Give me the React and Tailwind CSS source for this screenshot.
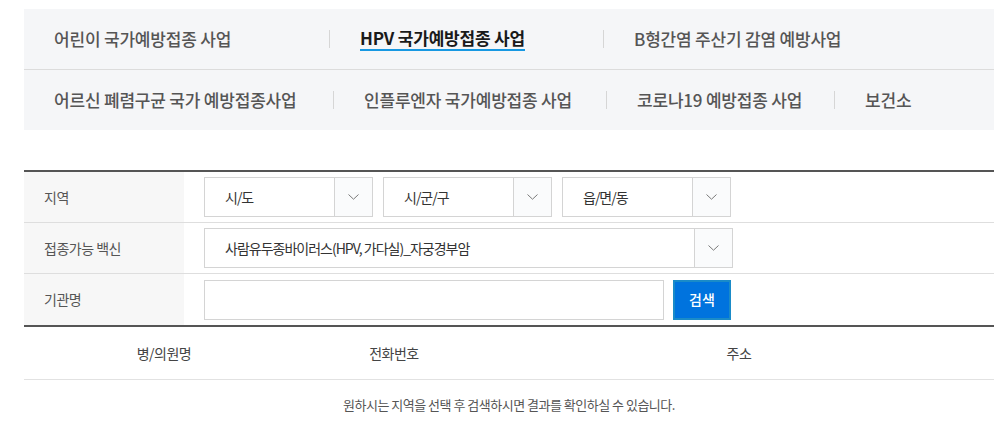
import React from 'react';

const font = { fontFamily: '"Noto Sans CJK KR", "Noto Sans", sans-serif' };

/* Nav rows: fixed item widths so dividers land where the reference has them */
const navRows = [
    [
        { label: '어린이 국가예방접종 사업', w: 'w-[305px]' },
        { label: 'HPV 국가예방접종 사업', w: 'w-[274px]', active: true },
        { label: 'B형간염 주산기 감염 예방사업', w: 'w-[300px]' },
    ],
    [
        { label: '어르신 폐렴구균 국가 예방접종사업', w: 'w-[309px]' },
        { label: '인플루엔자 국가예방접종 사업', w: 'w-[273px]' },
        { label: '코로나19 예방접종 사업', w: 'w-[228px]' },
        { label: '보건소', w: 'w-[120px]' },
    ],
];

const Chevron = () => (
    <svg width="11" height="6" viewBox="0 0 11 6" fill="none">
        <path d="M0.5 0.5L5.5 5.2L10.5 0.5" stroke="#7a7a7a" strokeWidth="1" />
    </svg>
);

const Select = ({ label, className }) => (
    <div className={`flex h-10 border border-[#d4d4d4] bg-white ${className}`}>
        <div className="flex-1 flex items-center pl-5 text-[14px] text-[#333] tracking-[-1px]">{label}</div>
        <div className="w-[38px] flex items-center justify-center border-l border-[#d4d4d4] bg-[#fafbfc]">
            <Chevron />
        </div>
    </div>
);

const FormRow = ({ label, children, last }) => (
    <div className={`flex h-[51px] ${last ? '' : 'border-b border-[#dedede]'}`}>
        <div className="w-[160px] bg-[#f7f7f7] flex items-center pl-5 text-[14px] text-[#555] tracking-[-0.5px]">{label}</div>
        <div className="flex-1 flex items-center pl-5 gap-[10px]">{children}</div>
    </div>
);

export default function App() {
    return (
        <div className="bg-white w-[1008px] h-[425px] overflow-hidden" style={font}>
            {/* Program tabs */}
            <div className="ml-6 mt-[9px] w-[970px] bg-[#f5f6f8]">
                {navRows.map((row, ri) => (
                    <div key={ri} className={`flex h-[60px] items-center ${ri === 0 ? 'border-b border-[#dcdcdc] h-[61px]' : ''}`}>
                        {row.map((item, i) => (
                            <div key={item.label} className={`flex items-center h-full ${item.w}`}>
                                {i > 0 && <span className="w-px h-[18px] bg-[#d6d6d6]" />}
                                <span
                                    className={`ml-[30px] text-[17px] tracking-[-0.2px] leading-[22px] ${
                                        item.active
                                            ? 'text-[#1a1a1a] font-semibold border-b-2 border-[#1798e2]'
                                            : 'text-[#555] font-medium'
                                    }`}
                                >
                                    {item.label}
                                </span>
                            </div>
                        ))}
                    </div>
                ))}
            </div>

            {/* Search form */}
            <div className="ml-6 mt-10 w-[970px] border-t-2 border-b-2 border-[#555]">
                <FormRow label="지역">
                    <Select label="시/도" className="w-[169px]" />
                    <Select label="시/군/구" className="w-[169px]" />
                    <Select label="읍/면/동" className="w-[169px]" />
                </FormRow>
                <FormRow label="접종가능 백신">
                    <Select label="사람유두종바이러스(HPV, 가다실)_자궁경부암" className="w-[529px]" />
                </FormRow>
                <FormRow label="기관명" last>
                    <input className="w-[460px] h-10 border border-[#d4d4d4] outline-none px-3" />
                    <button className="w-[58px] h-10 -ml-px bg-[#0073de] border-2 border-[#1a8bc8] text-white text-[14px] font-medium">
                        검색
                    </button>
                </FormRow>
            </div>

            {/* Results */}
            <div className="ml-6 w-[970px]">
                <div className="grid grid-cols-[280px_180px_1fr] h-[53px] items-center border-b border-[#e2e2e2] text-[14px] text-[#444] tracking-[-0.5px] text-center">
                    <div>병/의원명</div>
                    <div>전화번호</div>
                    <div>주소</div>
                </div>
                <div className="h-[50px] flex items-center justify-center text-[13px] text-[#555] tracking-[-0.5px]">
                    원하시는 지역을 선택 후 검색하시면 결과를 확인하실 수 있습니다.
                </div>
            </div>
        </div>
    );
}
